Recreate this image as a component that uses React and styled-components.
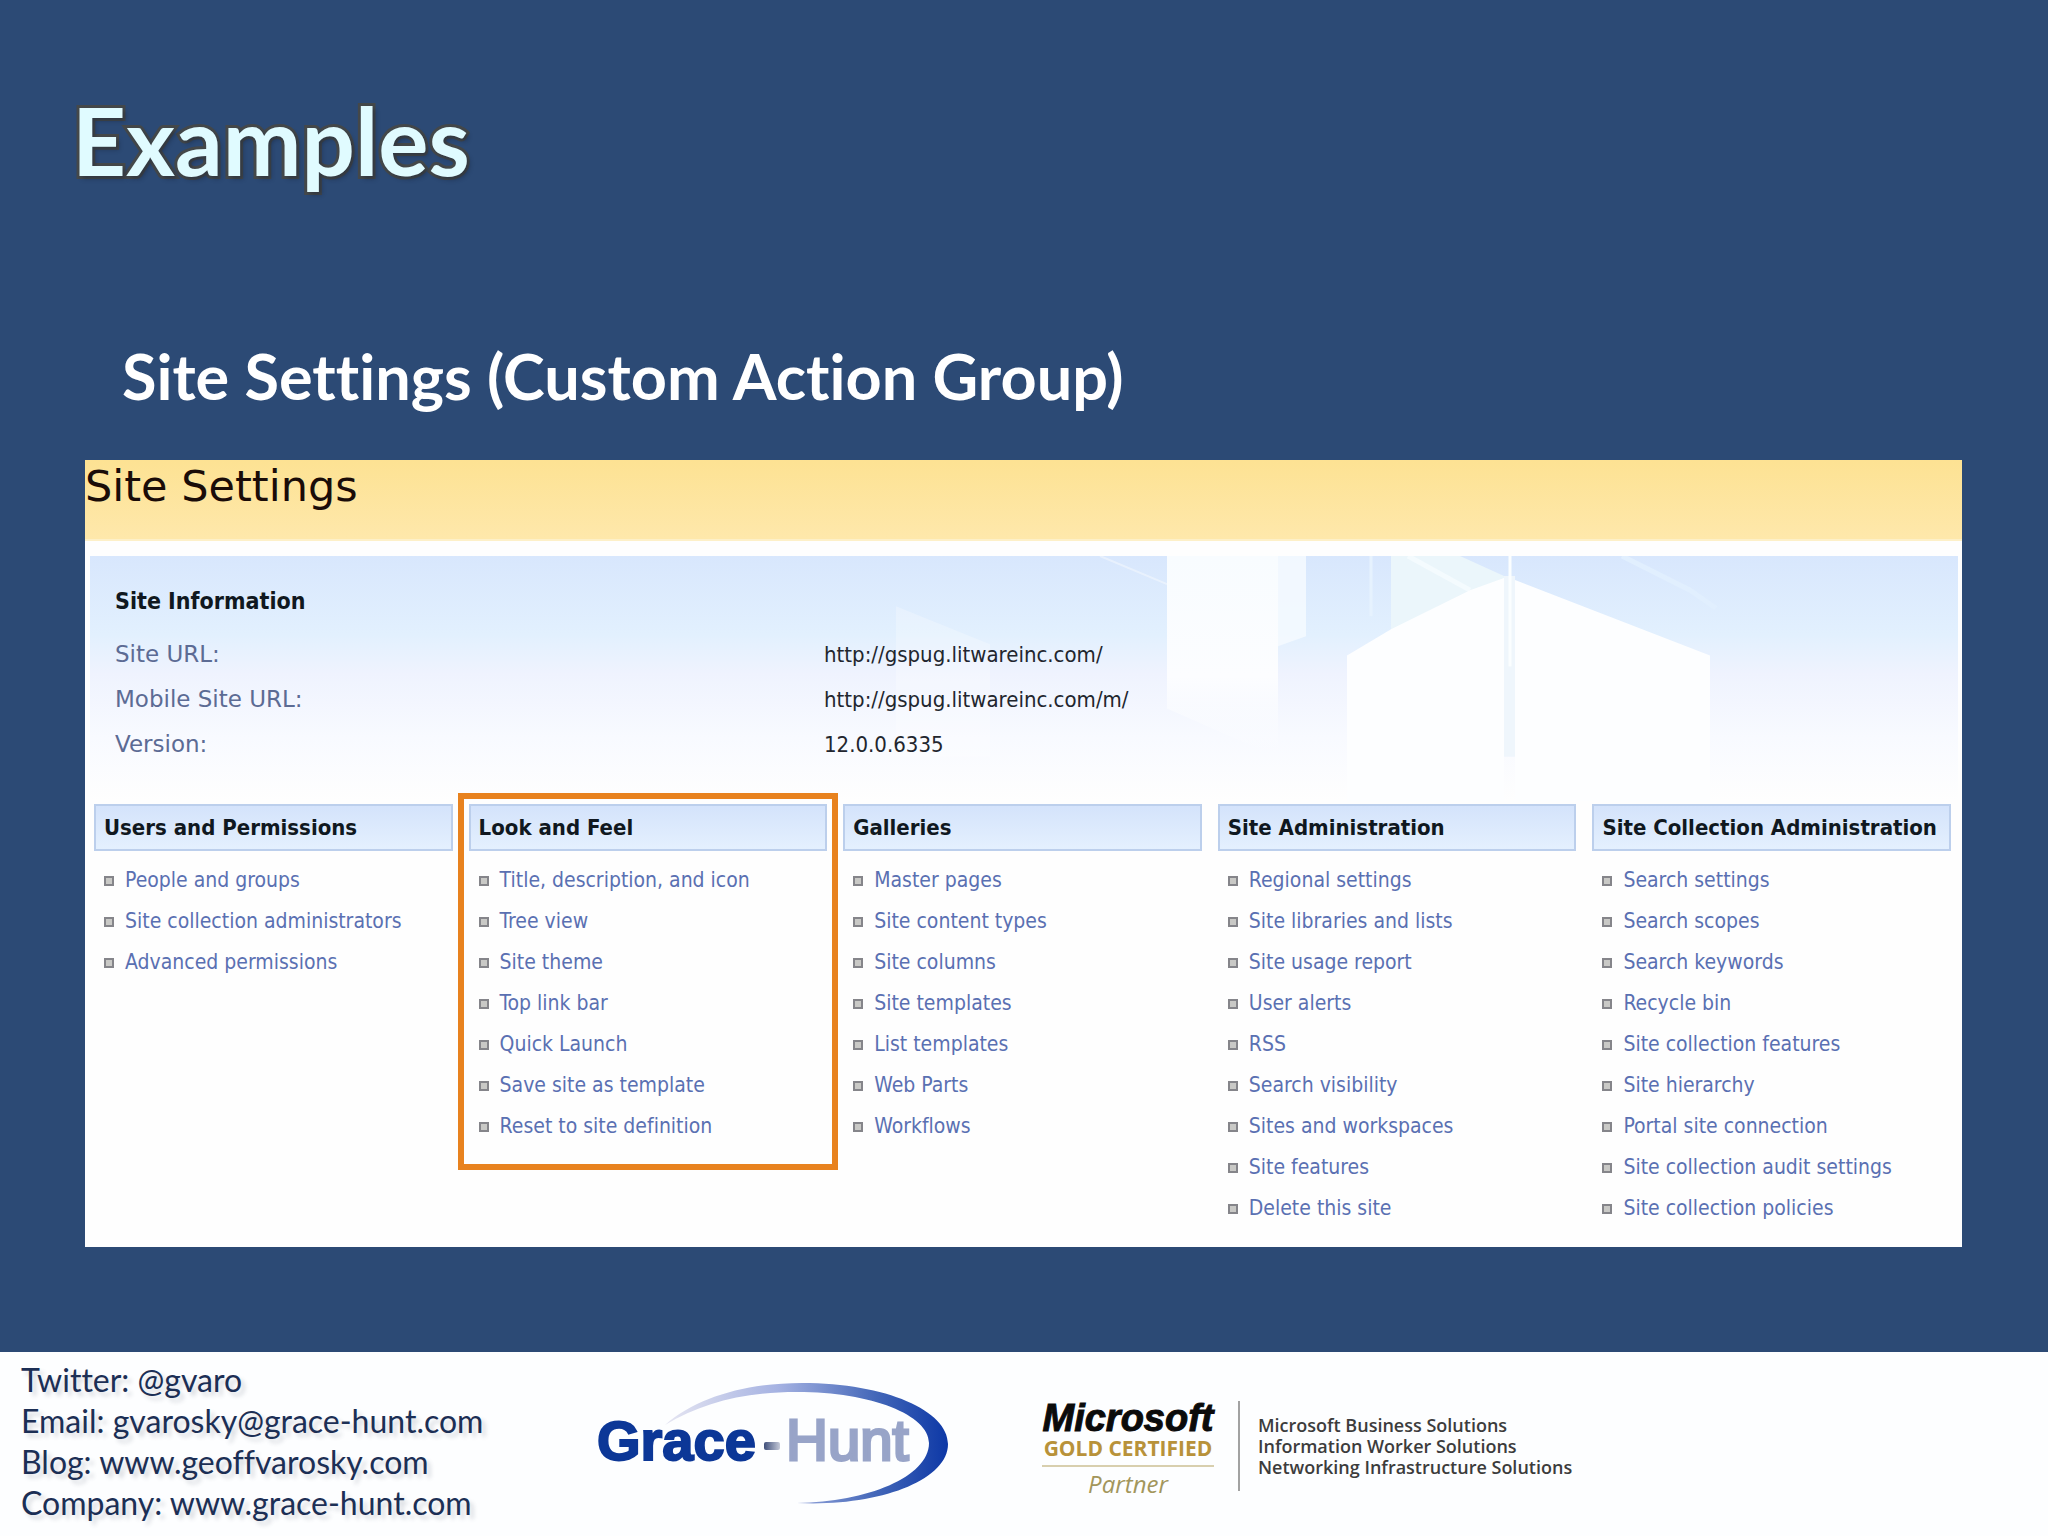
import React from "react";
import styled, { createGlobalStyle } from "styled-components";

const GlobalStyle = createGlobalStyle`
*, *::before {
    box-sizing: border-box;
}

body {
    margin: 0;
    background: #2c4a75;
}
`;

const Slide = styled.div`
display: flex;
flex-direction: column;
min-height: 100vh;
font-family: Lato, "Liberation Sans", sans-serif;
font-variant-ligatures: none;
`;

const Main = styled.main`
flex: 1;
padding: 82px 86px 0 85px;
`;

const Title = styled.h1`
margin: 0 0 0 -13px;
font-size: 94px;
line-height: 116px;
font-weight: 700;
color: #e0fbff;
-webkit-text-stroke: 6px #44484a;
paint-order: stroke fill;
text-shadow: 3px 3px 4px rgba(20, 30, 50, 0.4);
`;

const Subtitle = styled.h2`
margin: 136px 0 42px 37px;
font-size: 63px;
line-height: 84px;
font-weight: 700;
color: #fff;
`;

const Panel = styled.section`
background: #fefefe;
font-family: "DejaVu Sans Condensed", "DejaVu Sans", sans-serif;
font-stretch: condensed;
padding-bottom: 18px;
`;

const PanelTitle = styled.h3`
margin: 0;
height: 81px;
padding-top: 4px;
background: linear-gradient(#fde293, #fee8ab);
border-bottom: 2px solid #fdf0c8;
font-family: "DejaVu Sans", sans-serif;
font-size: 43px;
font-stretch: normal;
line-height: 44px;
font-weight: 400;
color: #1a0c08;
`;

const Info = styled.div`
position: relative;
margin: 15px 4px 0 5px;
padding: 30px 25px 34px;
background: linear-gradient(#d8e7fd, #e2f0fe 32%, #eff3fe 48%, #f8faff 74%, #fefefe);
`;

const Scenery = styled.svg`
position: absolute;
inset: 0;
width: 100%;
height: 100%;
`;

const InfoBody = styled.div`
position: relative;
`;

const InfoTitle = styled.h4`
margin: 0 0 16px;
font-size: 23px;
line-height: 30px;
color: #101820;
`;

const InfoTable = styled.table`
width: 100%;
border-collapse: collapse;
table-layout: fixed;
font-size: 22px;
line-height: 45px;
`;

const Label = styled.th`
width: 39%;
padding: 0;
text-align: start;
font-family: "DejaVu Sans", sans-serif;
font-size: 23px;
font-stretch: normal;
font-weight: 400;
color: #5c6b94;
`;

const Value = styled.td`
padding: 0;
color: #22262e;
`;

const Columns = styled.div`
display: grid;
grid-template-columns: repeat(5, 1fr);
gap: 16px;
align-items: start;
margin: 3px 11px 0 9px;
`;

const Column = styled.section`
${(props) =>
        props.$marked &&
        "position: relative; margin: -11px -11px 0; padding: 5px 5px 17px; border: 6px solid #e8821e;"}
`;

const ColumnTitle = styled.h4`
margin: 0 0 9px;
padding: 0 8px;
border: 2px solid #bccfec;
background: linear-gradient(#d4e3fb, #e4f0fe);
font-size: 22px;
line-height: 43px;
white-space: nowrap;
color: #101820;
`;

const List = styled.ul`
margin: 0;
padding: 0 0 0 10px;
list-style: none;
`;

const Item = styled.li`
display: flex;
align-items: center;
gap: 11px;
font-size: 21px;
line-height: 41px;

&::before {
    content: "";
    width: 10px;
    height: 10px;
    border: 2px solid #85858a;
    background: #c9c9c6;
}
`;

const Link = styled.a`
color: #5a70b2;
text-decoration: none;
white-space: nowrap;
`;

const Footer = styled.footer`
display: flex;
align-items: flex-start;
padding: 7px 21px 13px;
background: #fdfeff;
`;

const Contact = styled.address`
width: 576px;
font-size: 32px;
line-height: 41px;
font-style: normal;
color: #1c2f55;
text-shadow: 4px 4px 4px rgba(60, 70, 90, 0.2);
`;

const Logo = styled.svg`
display: block;
width: 351px;
height: 122px;
margin-top: 24px;
`;

const Partner = styled.div`
display: flex;
margin: 42px 0 0 94px;
font-family: "Open Sans", "Noto Sans", sans-serif;
`;

const Badge = styled.div`
display: flex;
flex-direction: column;
align-items: center;
width: 172px;
`;

const Brand = styled.strong`
font-family: "Liberation Sans", sans-serif;
font-size: 38px;
line-height: 34px;
font-style: italic;
color: #0b0b0b;
-webkit-text-stroke: 1px #0b0b0b;
`;

const Level = styled.span`
align-self: stretch;
padding-bottom: 4px;
border-bottom: 2px solid #d8cfae;
font-size: 21px;
line-height: 26px;
font-weight: 700;
text-align: center;
white-space: nowrap;
color: #b8923a;
`;

const Kind = styled.em`
font-size: 24px;
line-height: 34px;
color: #a3965c;
`;

const Solutions = styled.div`
height: 90px;
margin-left: 24px;
padding: 14px 0 0 18px;
border-left: 2px solid #a2a2a2;
font-size: 18px;
line-height: 21px;
font-weight: 600;
white-space: nowrap;
color: #3c3c3c;
`;

const info = [
    { label: "Site URL:", value: "http://gspug.litwareinc.com/" },
    { label: "Mobile Site URL:", value: "http://gspug.litwareinc.com/m/" },
    { label: "Version:", value: "12.0.0.6335" },
];

const columns = [
    {
        title: "Users and Permissions",
        links: ["People and groups", "Site collection administrators", "Advanced permissions"],
    },
    {
        title: "Look and Feel",
        marked: true,
        links: [
            "Title, description, and icon",
            "Tree view",
            "Site theme",
            "Top link bar",
            "Quick Launch",
            "Save site as template",
            "Reset to site definition",
        ],
    },
    {
        title: "Galleries",
        links: [
            "Master pages",
            "Site content types",
            "Site columns",
            "Site templates",
            "List templates",
            "Web Parts",
            "Workflows",
        ],
    },
    {
        title: "Site Administration",
        links: [
            "Regional settings",
            "Site libraries and lists",
            "Site usage report",
            "User alerts",
            "RSS",
            "Search visibility",
            "Sites and workspaces",
            "Site features",
            "Delete this site",
        ],
    },
    {
        title: "Site Collection Administration",
        links: [
            "Search settings",
            "Search scopes",
            "Search keywords",
            "Recycle bin",
            "Site collection features",
            "Site hierarchy",
            "Portal site connection",
            "Site collection audit settings",
            "Site collection policies",
        ],
    },
];

const contacts = [
    "Twitter: @gvaro",
    "Email: gvarosky@grace-hunt.com",
    "Blog: www.geoffvarosky.com",
    "Company: www.grace-hunt.com",
];

const Buildings = () => (
    <Scenery viewBox="0 0 1868 244" preserveAspectRatio="none" aria-hidden="true">
        <defs>
            <linearGradient id="tower" x1="0" x2="0" y1="0" y2="1">
                <stop offset="0" stopColor="#f8fcff" />
                <stop offset="0.6" stopColor="#fcfdff" />
                <stop offset="1" stopColor="#fcfdff" stopOpacity="0" />
            </linearGradient>
        </defs>
        <path d="M806 50L900 88V200H806z" fill="#fff" opacity="0.25" />
        <path d="M1010 0L1077 28" stroke="#fff" strokeWidth="2" opacity="0.4" />
        <path d="M1077 0H1188V200L1150 184L1077 152z" fill="url(#tower)" />
        <path d="M1188 0H1216V80L1188 90z" fill="#f4faff" opacity="0.9" />
        <path d="M1281 0V60" stroke="#e6f2fe" strokeWidth="3" />
        <path d="M1301 0H1370L1414 20V60L1301 90z" fill="#ebf6fb" />
        <path d="M1318 0L1380 34" stroke="#f4fbfe" strokeWidth="5" />
        <path d="M1257 99L1301 73L1380 34L1414 22V244H1257z" fill="#fdfeff" />
        <path d="M1425 24L1620 99V244H1425z" fill="#fdfeff" />
        <path d="M1414 20H1425V200H1414z" fill="#eff6fc" />
        <path d="M1420 0V110" stroke="#fbfeff" strokeWidth="3" />
        <path d="M1532 0L1600 34L1626 52" fill="none" stroke="#e1effe" strokeWidth="5" />
    </Scenery>
);

const GraceHuntLogo = () => (
    <Logo viewBox="0 0 351 122" role="img" aria-label="Grace-Hunt">
        <defs>
            <linearGradient id="swoosh" x1="0" x2="1" y1="0" y2="0">
                <stop offset="0" stopColor="#e6e6f2" />
                <stop offset="0.4" stopColor="#a5b2e2" />
                <stop offset="0.75" stopColor="#4266b8" />
                <stop offset="1" stopColor="#0d38a6" />
            </linearGradient>
            <linearGradient id="dash" x1="0" x2="1" y1="0" y2="0">
                <stop offset="0" stopColor="#3f4f7a" />
                <stop offset="1" stopColor="#c4c9d8" />
            </linearGradient>
        </defs>
        <path
            d="M68 42C100 14 150 0 205 0C290 0 351 28 351 61C351 98 280 124 200 120C270 119 332 94 332 60C332 32 275 9 200 9C145 9 105 20 68 42z"
            fill="url(#swoosh)"
        />
        <g fontFamily="Liberation Sans, sans-serif">
            <text x="0" y="77" fontSize="56" fontWeight="700" fill="#0c3797" stroke="#0c3797" strokeWidth="2">Grace</text>
            <text x="189" y="77" fontSize="58" fill="#98a4c8" stroke="#98a4c8" strokeWidth="3">Hunt</text>
        </g>
        <rect x="167" y="59" width="16" height="8" rx="2" fill="url(#dash)" />
    </Logo>
);

const App = () => {
    return (
        <Slide>
            <GlobalStyle />
            <Main>
                <Title>Examples</Title>
                <Subtitle>Site Settings (Custom Action Group)</Subtitle>
                <Panel>
                    <PanelTitle>Site Settings</PanelTitle>
                    <Info>
                        <Buildings />
                        <InfoBody>
                            <InfoTitle>Site Information</InfoTitle>
                            <InfoTable>
                                <tbody>
                                    {info.map((item) => (
                                        <tr key={item.label}>
                                            <Label scope="row">{item.label}</Label>
                                            <Value>{item.value}</Value>
                                        </tr>
                                    ))}
                                </tbody>
                            </InfoTable>
                        </InfoBody>
                    </Info>
                    <Columns>
                        {columns.map((column) => (
                            <Column key={column.title} $marked={column.marked}>
                                <ColumnTitle>{column.title}</ColumnTitle>
                                <List>
                                    {column.links.map((link) => (
                                        <Item key={link}>
                                            <Link href="#">{link}</Link>
                                        </Item>
                                    ))}
                                </List>
                            </Column>
                        ))}
                    </Columns>
                </Panel>
            </Main>
            <Footer>
                <Contact>
                    {contacts.map((line) => (
                        <div key={line}>{line}</div>
                    ))}
                </Contact>
                <GraceHuntLogo />
                <Partner>
                    <Badge>
                        <Brand>Microsoft</Brand>
                        <Level>GOLD CERTIFIED</Level>
                        <Kind>Partner</Kind>
                    </Badge>
                    <Solutions>
                        <div>Microsoft Business Solutions</div>
                        <div>Information Worker Solutions</div>
                        <div>Networking Infrastructure Solutions</div>
                    </Solutions>
                </Partner>
            </Footer>
        </Slide>
    );
};

export default App;
